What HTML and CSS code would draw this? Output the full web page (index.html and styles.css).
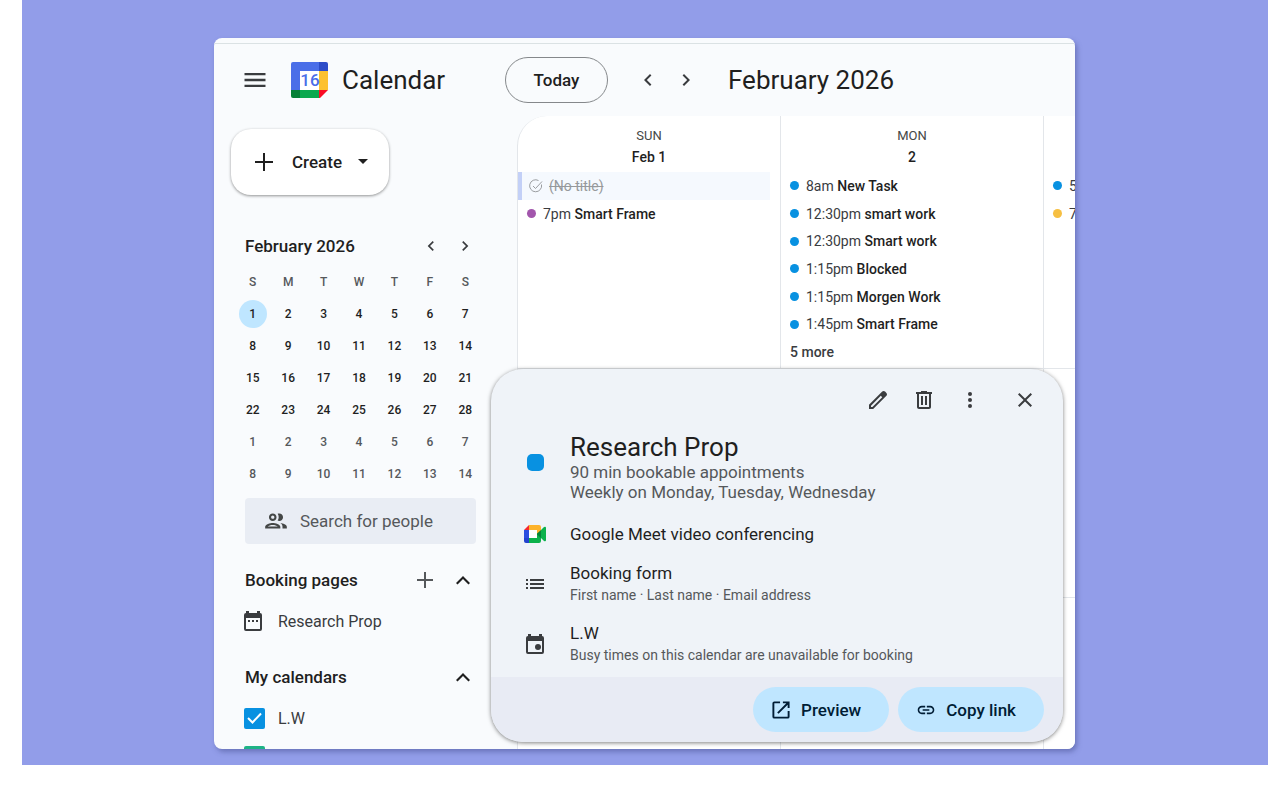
FILE: index.html
```html
<!DOCTYPE html>
<html lang="en">
<head>
<meta charset="utf-8">
<title>Calendar</title>
<link rel="stylesheet" href="styles.css">
</head>
<body>
<main class="stage">
<div class="window">
  <header class="topbar">
    <div class="brand">
      <button class="icon-btn" aria-label="Main menu"><svg width="28" height="28" viewBox="0 0 24 24"><path d="M3 18h18v-2H3v2zm0-5h18v-2H3v2zm0-7v2h18V6H3z"/></svg></button>
      <svg class="logo" width="38" height="38" viewBox="0 0 38 38" aria-hidden="true">
        <path fill="#4a6ee8" d="M2 1h27v9H9v19H0V3a2 2 0 0 1 2-2z"/>
        <path fill="#2d4cc8" d="M28 1h7a2 2 0 0 1 2 2v7h-9z"/>
        <path fill="#fdc130" d="M28 10h9v19h-9z"/>
        <path fill="#0ba84f" d="M9 29h20v8H9z"/>
        <path fill="#068036" d="M0 29h9v8H2a2 2 0 0 1-2-2z"/>
        <path fill="#fa0b24" d="M28 29h9l-8 8h-1z"/>
        <path fill="#fff" d="M9 10h19v19H9z"/>
        <text class="logo-day" x="19" y="25" text-anchor="middle">16</text>
      </svg>
      <span class="brand-name">Calendar</span>
    </div>
    <button class="today">Today</button>
    <div class="pager">
      <button class="icon-btn" aria-label="Previous month"><svg width="24" height="24" viewBox="0 0 24 24"><path d="M15.41 7.41L14 6l-6 6 6 6 1.41-1.41L10.83 12z"/></svg></button>
      <button class="icon-btn" aria-label="Next month"><svg width="24" height="24" viewBox="0 0 24 24"><path d="M10 6L8.590 7.410 13.170 12l-4.580 4.590L10 18l6-6z"/></svg></button>
    </div>
    <h1 class="period">February 2026</h1>
  </header>
  <div class="body">
    <aside class="sidebar">
      <button class="create">
        <svg width="20" height="20" viewBox="0 0 20 20"><path d="M9 1h2v8h8v2h-8v8H9v-8H1V9h8z"/></svg>
        <span>Create</span>
        <svg width="10" height="6" viewBox="0 0 10 6"><path d="M0 0h10L5 5z"/></svg>
      </button>
      <section class="mini">
        <div class="mini-head">
          <h2>February 2026</h2>
          <button class="icon-btn" aria-label="Previous"><svg width="20" height="20" viewBox="0 0 24 24"><path d="M15.41 7.41L14 6l-6 6 6 6 1.41-1.41L10.83 12z"/></svg></button>
          <button class="icon-btn" aria-label="Next"><svg width="20" height="20" viewBox="0 0 24 24"><path d="M10 6L8.590 7.410 13.170 12l-4.580 4.590L10 18l6-6z"/></svg></button>
        </div>
        <table class="month">
          <thead><tr><th>S</th><th>M</th><th>T</th><th>W</th><th>T</th><th>F</th><th>S</th></tr></thead>
          <tbody>
            <tr><td><span class="current">1</span></td><td>2</td><td>3</td><td>4</td><td>5</td><td>6</td><td>7</td></tr>
            <tr><td>8</td><td>9</td><td>10</td><td>11</td><td>12</td><td>13</td><td>14</td></tr>
            <tr><td>15</td><td>16</td><td>17</td><td>18</td><td>19</td><td>20</td><td>21</td></tr>
            <tr><td>22</td><td>23</td><td>24</td><td>25</td><td>26</td><td>27</td><td>28</td></tr>
            <tr class="next"><td>1</td><td>2</td><td>3</td><td>4</td><td>5</td><td>6</td><td>7</td></tr>
            <tr class="next"><td>8</td><td>9</td><td>10</td><td>11</td><td>12</td><td>13</td><td>14</td></tr>
          </tbody>
        </table>
      </section>
      <label class="search">
        <svg width="26" height="26" viewBox="0 0 24 24"><path d="M9 13.750c-2.340 0-7 1.170-7 3.500V19h14v-1.750c0-2.330-4.660-3.500-7-3.500zM4.340 17c.84-.58 2.870-1.250 4.660-1.250s3.820.67 4.660 1.250H4.340zM9 12c1.930 0 3.500-1.570 3.500-3.500S10.930 5 9 5 5.500 6.570 5.500 8.500 7.070 12 9 12zm0-5c.83 0 1.500.67 1.500 1.500S9.830 10 9 10s-1.500-.67-1.500-1.500S8.170 7 9 7zm7.040 6.810c1.160.84 1.960 1.960 1.960 3.440V19h4v-1.750c0-2.020-3.500-3.170-5.960-3.440zM15 12c1.930 0 3.500-1.570 3.500-3.500S16.930 5 15 5c-.54 0-1.040.13-1.500.35.63.89 1 1.980 1 3.150s-.37 2.260-1 3.150c.46.22.96.35 1.500.35z"/></svg>
        <input type="text" placeholder="Search for people" aria-label="Search for people">
      </label>
      <section class="group">
        <div class="group-head">
          <h2>Booking pages</h2>
          <button class="icon-btn muted" aria-label="Create booking page"><svg width="16" height="16" viewBox="0 0 16 16"><path d="M7 0h2v7h7v2H9v7H7V9H0V7h7z"/></svg></button>
          <button class="icon-btn" aria-label="Collapse booking pages"><svg width="24" height="24" viewBox="0 0 24 24"><path d="M12 8l-7 7 1.500 1.500L12 11l5.500 5.500L19 15z"/></svg></button>
        </div>
        <a class="row" href="#"><svg width="20" height="20" viewBox="0 0 20 20"><path d="M3 0h3v2h8V0h3v2a2 2 0 0 1 2 2v14a2 2 0 0 1-2 2H3a2 2 0 0 1-2-2V4a2 2 0 0 1 2-2zM3 7v11h14V7zM5 9h2v2H5zm4 0h2v2H9zm4 0h2v2h-2z"/></svg><span>Research Prop</span></a>
      </section>
      <section class="group calendars">
        <div class="group-head">
          <h2>My calendars</h2>
          <button class="icon-btn" aria-label="Collapse my calendars"><svg width="24" height="24" viewBox="0 0 24 24"><path d="M12 8l-7 7 1.500 1.500L12 11l5.500 5.500L19 15z"/></svg></button>
        </div>
        <label class="row"><span class="check"><input type="checkbox" checked><svg width="15" height="12" viewBox="0 0 15 12"><path d="M1 6l4.500 4.500L14 1.500"/></svg></span><span>L.W</span></label>
        <label class="row"><span class="check green"><input type="checkbox" checked><svg width="15" height="12" viewBox="0 0 15 12"><path d="M1 6l4.500 4.500L14 1.500"/></svg></span><span>Birthdays</span></label>
      </section>
    </aside>
    <section class="grid">
      <div class="cell">
        <div class="dow">SUN</div><div class="date">Feb 1</div>
        <ul class="events">
          <li class="task"><svg width="14" height="14" viewBox="0 0 14 14"><path d="M12.500 5.500A6 6 0 1 1 9.500 1.500M4 7l2.500 2.500L13 2.500"/></svg><s>(No title)</s></li>
          <li><i class="dot purple"></i><span>7pm <b>Smart Frame</b></span></li>
        </ul>
      </div>
      <div class="cell">
        <div class="dow">MON</div><div class="date">2</div>
        <ul class="events">
          <li><i class="dot"></i><span>8am <b>New Task</b></span></li>
          <li><i class="dot"></i><span>12:30pm <b>smart work</b></span></li>
          <li><i class="dot"></i><span>12:30pm <b>Smart work</b></span></li>
          <li><i class="dot"></i><span>1:15pm <b>Blocked</b></span></li>
          <li><i class="dot"></i><span>1:15pm <b>Morgen Work</b></span></li>
          <li><i class="dot"></i><span>1:45pm <b>Smart Frame</b></span></li>
          <li><button class="more">5 more</button></li>
        </ul>
      </div>
      <div class="cell">
        <div class="dow"></div><div class="date"></div>
        <ul class="events">
          <li><i class="dot"></i><span>5</span></li>
          <li><i class="dot yellow"></i><span>7</span></li>
        </ul>
      </div>
      <div class="cell"></div><div class="cell"></div><div class="cell"></div>
      <div class="cell"></div><div class="cell"></div><div class="cell"></div>
    </section>
  </div>
  <div class="dialog" role="dialog" aria-label="Research Prop">
    <div class="tools">
      <button class="icon-btn" aria-label="Edit"><svg width="24" height="24" viewBox="0 0 24 24"><path d="M20.410 4.940l-1.350-1.350c-.78-.78-2.050-.78-2.830 0L3 16.820V21h4.180L20.410 7.770c.79-.78.79-2.050 0-2.830zM6.410 19.060L5 19v-1.360l9.820-9.820 1.410 1.410-9.820 9.830z"/></svg></button>
      <button class="icon-btn" aria-label="Delete"><svg width="24" height="24" viewBox="0 0 24 24"><path d="M15 4V3H9v1H4v2h1v13c0 1.100.9 2 2 2h10c1.100 0 2-.9 2-2V6h1V4h-5zm2 15H7V6h10v13zM9 8h2v9H9zm4 0h2v9h-2z"/></svg></button>
      <button class="icon-btn" aria-label="More options"><svg width="24" height="24" viewBox="0 0 24 24"><circle cx="12" cy="6" r="2"/><circle cx="12" cy="12" r="2"/><circle cx="12" cy="18" r="2"/></svg></button>
      <button class="icon-btn close" aria-label="Close"><svg width="24" height="24" viewBox="0 0 24 24"><path d="M19 6.410L17.590 5 12 10.590 6.410 5 5 6.410 10.590 12 5 17.590 6.410 19 12 13.410 17.590 19 19 17.590 13.410 12z"/></svg></button>
    </div>
    <div class="details">
      <div class="detail heading">
        <span class="glyph"><i class="swatch"></i></span>
        <div><h2 class="title">Research Prop</h2><p class="sub">90 min bookable appointments</p><p class="sub">Weekly on Monday, Tuesday, Wednesday</p></div>
      </div>
      <div class="detail">
        <span class="glyph"><svg width="22" height="18" viewBox="0 0 22 18"><path fill="#2b4fe0" d="M0 5h5v8H0z"/><path fill="#2343cf" d="M0 13h5v5H2a2 2 0 0 1-2-2z"/><path fill="#f5252f" d="M5 0v5H0z"/><path fill="#fdb32b" d="M5 0h10a2 2 0 0 1 2 2v6l-4 1V5H5z"/><path fill="#0bb14b" d="M5 13h8V9l4-1v8a2 2 0 0 1-2 2H5z"/><path fill="#0bb14b" d="M17 5l3-3q2-1 2 1v12q0 2-2 1l-3-3z"/><path fill="#04843a" d="M12.500 9L17 5v8z"/><path fill="#fff" d="M5 5h8v8H5z"/></svg></span>
        <p class="main">Google Meet video conferencing</p>
      </div>
      <div class="detail">
        <span class="glyph"><svg width="18" height="10" viewBox="0 0 18 10"><path d="M0 0h2v2H0zm4 0h14v2H4zM0 4h2v2H0zm4 0h14v2H4zM0 8h2v2H0zm4 0h14v2H4z"/></svg></span>
        <div><p class="main">Booking form</p><p class="note">First name · Last name · Email address</p></div>
      </div>
      <div class="detail">
        <span class="glyph"><svg width="18" height="20" viewBox="0 0 18 20"><path d="M2 0h3v2h8V0h3v2a2 2 0 0 1 2 2v14a2 2 0 0 1-2 2H2a2 2 0 0 1-2-2V4a2 2 0 0 1 2-2zM2 7v11h14V7z"/><circle cx="12" cy="13" r="3"/></svg></span>
        <div><p class="main">L.W</p><p class="note">Busy times on this calendar are unavailable for booking</p></div>
      </div>
    </div>
    <div class="actions">
      <button class="pill"><svg width="20" height="20" viewBox="-1.500 -1.500 21 21"><path d="M16 16H2V2h6V0H2a2 2 0 0 0-2 2v14a2 2 0 0 0 2 2h14a2 2 0 0 0 2-2v-6h-2zM11 0v2h3.590L5 11.590 6.410 13 16 3.410V7h2V0z"/></svg><span>Preview</span></button>
      <button class="pill"><svg width="20" height="20" viewBox="0 0 24 24"><path d="M3.900 12c0-1.710 1.390-3.100 3.100-3.100h4V7H7c-2.760 0-5 2.240-5 5s2.240 5 5 5h4v-1.900H7c-1.710 0-3.100-1.390-3.100-3.100zM8 13h8v-2H8v2zm9-6h-4v1.900h4c1.710 0 3.100 1.390 3.100 3.100s-1.390 3.100-3.100 3.100h-4V17h4c2.760 0 5-2.240 5-5s-2.240-5-5-5z"/></svg><span>Copy link</span></button>
    </div>
  </div>
</div>
</main>
</body>
</html>
```
FILE: styles.css
```css
* { box-sizing: border-box; margin: 0; padding: 0; }
body { background: #fff; color: #1f1f1f; font-family: Roboto, "Liberation Sans", sans-serif; font-size: 16px; }
button { background: none; border: 0; color: inherit; font: inherit; cursor: pointer; }
svg { display: block; flex: none; fill: currentColor; }
ul { list-style: none; }
.stage { display: flex; height: calc(100vh - 23px); margin: 0 20px 0 22px; padding: 38px 193px 16px 192px; background: #929de9; }
.window { position: relative; flex: 1; display: flex; flex-direction: column; min-width: 0; overflow: hidden; border-radius: 8px; background: #f9fbfd; box-shadow: 2px 3px 5px #4a539588; }
.window::before { content: ""; flex: none; height: 5px; border-bottom: 1px solid #dbe2e4; }
.icon-btn { display: flex; align-items: center; justify-content: center; color: #3a3c3f; }
.topbar { display: flex; align-items: center; flex: none; height: 72px; padding-left: 27px; }
.brand { display: flex; align-items: center; width: 264px; }
.logo { margin: 0 13px 0 22px; }
.logo-day { font-size: 17px; font-weight: 500; fill: #4a6ee8; }
.brand-name { font-size: 26px; }
.today { width: 103px; height: 46px; border: 1px solid #85888b; border-radius: 23px; font-weight: 500; font-size: 17px; }
.pager { display: flex; gap: 14px; margin-left: 28px; }
.period { margin-left: 30px; font-size: 26px; font-weight: 400; }
.body { display: flex; flex: 1; min-height: 0; }
.sidebar { flex: none; width: 303px; padding: 13px 41px 0 31px; overflow: hidden; }
.create { display: flex; align-items: center; height: 66px; width: 158px; margin-left: -14px; padding-left: 23px; border-radius: 20px; background: #fff; font-size: 17px; font-weight: 500; box-shadow: 0 1px 3px #0000006b; }
.create span { margin: 0 16px 0 18px; }
.mini { margin-top: 36px; }
.mini-head { display: flex; align-items: center; height: 30px; }
h2 { flex: 1; font-size: 17px; font-weight: 500; }
.mini-head .icon-btn { width: 34px; }
.mini-head .icon-btn:last-child { margin-right: -6px; }
.month { width: 248px; margin: 4px 0 0 -10px; border-collapse: collapse; table-layout: fixed; font-size: 12px; font-weight: 500; }
.month th, .month td { height: 32px; text-align: center; }
.month th { height: 33px; font-weight: 500; color: #55585b; }
.next { color: #55585b; }
.current { display: block; width: 28px; margin: auto; border-radius: 50%; background: #bfe6ff; line-height: 28px; }
.search { display: flex; align-items: center; gap: 11px; height: 46px; margin-top: 8px; padding-left: 18px; border-radius: 4px; background: #e9edf4; color: #444746; }
.search input { width: 160px; border: 0; outline: 0; background: none; font: inherit; font-size: 17px; color: #55585b; }
.search input::placeholder { color: #55585b; opacity: 1; }
.group { margin-top: 18px; }
.group-head { display: flex; align-items: center; height: 36px; margin-bottom: 4px; }
.group-head .icon-btn { width: 38px; color: #1f1f1f; }
.group-head .muted { color: #55585b; }
.group-head .icon-btn:last-child { margin-right: -6px; }
.row { display: flex; align-items: center; height: 38px; gap: 13px; color: #3a3c3f; text-decoration: none; }
a.row { gap: 15px; margin-left: -2px; }
.calendars { margin-top: 19px; }
.check { position: relative; display: flex; align-items: center; justify-content: center; width: 21px; height: 21px; border-radius: 2px; background: #0891e1; margin-left: -1px; }
.check input { position: absolute; inset: 0; opacity: 0; }
.check svg { fill: none; stroke: #fff; stroke-width: 2; }
.green { background: #1eb386; }
.grid { flex: 1; display: grid; grid-template-columns: repeat(3, 263px); grid-template-rows: 253px 229px 229px; min-width: 0; overflow: hidden; border-top-left-radius: 30px; border-left: 1px solid #e3e6ea; background: #fff; }
.cell { border-right: 1px solid #e3e6ea; border-bottom: 1px solid #e3e6ea; padding-top: 10px; text-align: center; }
.dow { height: 20px; font-size: 13px; line-height: 20px; color: #444746; }
.date { height: 22px; font-size: 14px; font-weight: 500; line-height: 22px; }
.events { display: grid; grid-template-rows: repeat(7, 1fr); height: 194px; margin-top: 4px; padding: 0 10px 0 9px; text-align: left; font-size: 14px; }
.events li { display: flex; align-items: center; gap: 7px; white-space: nowrap; color: #3a3c3f; }
.events b { font-weight: 500; color: #1f1f1f; }
.dot { width: 9px; height: 9px; border-radius: 50%; background: #0891e1; }
.purple { background: #a256ac; }
.yellow { background: #f6bf42; }
.events .task { margin-left: -9px; padding-left: 7px; gap: 6px; background: #f5f9fe; color: #96999c; border-left: 4px solid #c3d0f7; }
.task svg { fill: none; stroke: #9a9da0; }
.more { font-weight: 500; }
.dialog { position: absolute; top: 331px; left: 277px; right: 12px; overflow: hidden; border-radius: 32px; background: #eff3f8; box-shadow: 0 1px 4px #00000080; }
.tools { display: flex; justify-content: flex-end; align-items: center; height: 62px; padding-right: 26px; gap: 22px; }
.tools .close { margin-left: 9px; }
.details { padding: 1px 30px 11px 32px; }
.detail { display: flex; align-items: center; margin-bottom: 15px; }
.detail:last-child { margin-bottom: 0; }
.heading { align-items: flex-start; margin-bottom: 20px; }
.heading .glyph { align-items: center; height: 60px; }
.glyph { display: flex; justify-content: center; flex: none; width: 24px; margin-right: 23px; color: #3a3c3f; }
.swatch { width: 17px; height: 17px; border-radius: 5px; background: #0891e1; }
.title { font-size: 26px; line-height: 30px; font-weight: 400; }
.sub { font-size: 17px; line-height: 20px; color: #55585b; }
.main { font-size: 17px; line-height: 24px; }
.note { font-size: 14px; line-height: 21px; color: #55585b; }
.actions { display: flex; justify-content: flex-end; gap: 9px; padding: 10px 19px; background: #e8ebf4; }
.pill { display: flex; align-items: center; gap: 10px; height: 45px; padding: 0 28px 0 18px; border-radius: 23px; background: #bfe6ff; color: #001d35; font-size: 17px; font-weight: 500; }
```
